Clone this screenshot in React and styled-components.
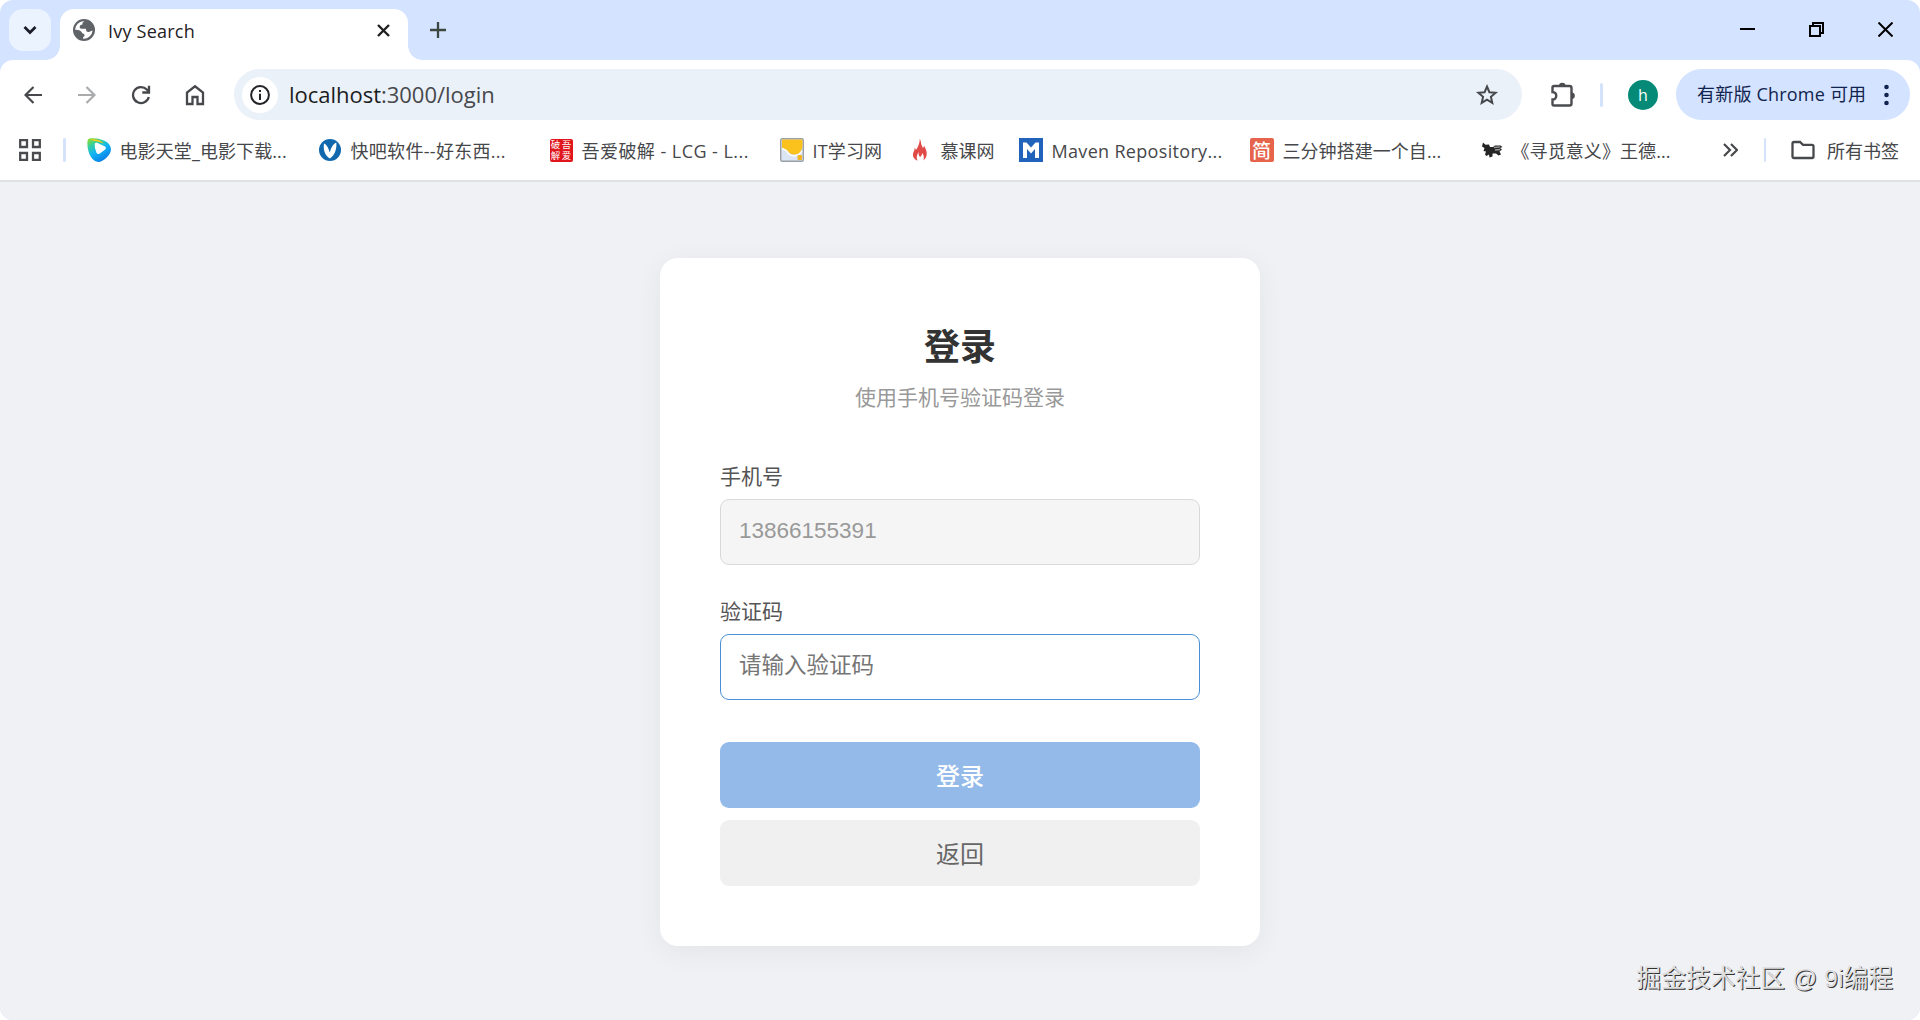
import React from 'react';
import styled, { createGlobalStyle } from 'styled-components';

const Global = createGlobalStyle`
  *, *::before, *::after { box-sizing: border-box; }
  body { margin: 0; background: #fff; overflow: hidden; }
  svg { display: block; flex: none; }
  button, input { font: inherit; margin: 0; }
`;

const Window = styled.div`
  position: relative;
  display: flex;
  flex-direction: column;
  width: 1920px;
  height: 1020px;
  border-radius: 13px;
  overflow: hidden;
  background: #d4e3ff;
  font-family: "Open Sans", "Noto Sans CJK SC", sans-serif;
`;

const TabStrip = styled.div`
  display: flex;
  height: 60px;
  padding: 9px 27px 0 9px;
`;

const TabSearch = styled.div`
  display: grid;
  place-items: center;
  width: 42px;
  height: 42px;
  border-radius: 14px;
  background: #ebf3ff;
`;

const Tab = styled.div`
  position: relative;
  display: flex;
  align-items: center;
  width: 348px;
  height: 51px;
  margin-left: 9px;
  padding: 0 18px 9px 13px;
  border-radius: 14px 14px 0 0;
  background: #fff;
  &::before, &::after {
    content: "";
    position: absolute;
    bottom: 0;
    width: 14px;
    height: 14px;
  }
  &::before { left: -14px; background: radial-gradient(circle at 0 0, transparent 13.5px, #fff 14px); }
  &::after { right: -14px; background: radial-gradient(circle at 100% 0, transparent 13.5px, #fff 14px); }
`;

const TabTitle = styled.span`
  flex: 1;
  margin-left: 13px;
  padding-top: 2px;
  font-size: 18px;
  line-height: 24px;
  letter-spacing: 0.22px;
  color: #1f2023;
`;

const NewTab = styled.div`
  display: grid;
  place-items: center;
  width: 42px;
  height: 42px;
  margin-left: 9px;
`;

const WindowControls = styled.div`
  display: flex;
  gap: 54px;
  height: 41px;
  align-items: center;
  margin-left: auto;
`;

const Chrome = styled.div`
  background: #fff;
  border-radius: 13px 13px 0 0;
  height: 122px;
  border-bottom: 2px solid #dfe1e4;
`;

const Toolbar = styled.div`
  display: flex;
  align-items: center;
  height: 69px;
  padding: 0 10px 0 6px;
`;

const NavButton = styled.div`
  display: grid;
  place-items: center;
  width: 54px;
  height: 51px;
  color: ${p => (p.$off ? '#a9abad' : '#46484b')};
`;

const Omnibox = styled.div`
  display: flex;
  align-items: center;
  width: 1288px;
  height: 51px;
  margin-left: 12px;
  padding: 0 23px 0 8px;
  border-radius: 26px;
  background: #ebf1f9;
`;

const SiteInfo = styled.div`
  display: grid;
  place-items: center;
  width: 36px;
  height: 36px;
  border-radius: 50%;
  background: #fff;
`;

const Url = styled.div`
  flex: 1;
  margin-left: 11px;
  padding-bottom: 1px;
  font-size: 22px;
  line-height: 30px;
  letter-spacing: -0.02px;
  color: #46484c;
  b { font-weight: 400; color: #1c1d20; }
`;

const Divider = styled.div`
  width: 3px;
  height: 24px;
  border-radius: 2px;
  background: #d4e3fb;
  margin: 0 ${p => p.$r}px 0 ${p => p.$l}px;
`;

const Extensions = styled.div`
  margin-left: 28px;
`;

const Avatar = styled.div`
  display: grid;
  place-items: center;
  width: 30px;
  height: 30px;
  border-radius: 50%;
  background: #058a78;
  color: #fff;
  font-size: 16px;
  line-height: 30px;
`;

const UpdateChip = styled.div`
  display: flex;
  align-items: center;
  justify-content: space-between;
  width: 234px;
  height: 51px;
  margin-left: 18px;
  padding: 0 21px 0 21px;
  border-radius: 26px;
  background: #d4e3ff;
  color: #10244f;
  font-size: 18px;
  line-height: 26px;
  letter-spacing: 0.2px;
  white-space: nowrap;
  span { padding-bottom: 1px; }
`;

const Bookmarks = styled.div`
  display: flex;
  align-items: center;
  height: 42px;
  padding: 0 20px 0 19px;
`;

const Bookmark = styled.div`
  display: flex;
  align-items: center;
  width: ${p => p.$w}px;
  flex: none;
  gap: ${p => p.$gap || 9}px;
  color: #46474a;
  font-size: 18px;
  line-height: 26px;
  letter-spacing: ${p => p.$ls || 0}px;
  white-space: nowrap;
`;

const BookmarkName = styled.span`
  padding-top: 2px;
`;

const Seal = styled.div`
  display: grid;
  grid-template-columns: 11px 11px;
  grid-template-rows: 11px 11px;
  place-content: center;
  width: 23px;
  height: 23px;
  border-radius: 2px;
  background: #e0161c;
  color: #fff;
  font: 400 9.5px/11px "Liberation Sans", "Noto Sans CJK SC", sans-serif;
  text-align: center;
  letter-spacing: 0;
`;

const JianBadge = styled.div`
  width: 24px;
  height: 24px;
  border-radius: 2px;
  background: #e6644c;
  color: #fff;
  font: 500 19px/23px "Noto Sans CJK SC", sans-serif;
  text-align: center;
  letter-spacing: 0;
`;

const Page = styled.main`
  flex: 1;
  display: flex;
  justify-content: center;
  align-items: flex-start;
  padding-top: 76px;
  background: #f0f1f5;
`;

const Card = styled.form`
  display: flex;
  flex-direction: column;
  width: 600px;
  height: 688px;
  padding: 63px 60px 60px;
  border-radius: 18px;
  background: #fff;
  box-shadow: 0 6px 30px rgba(0, 0, 0, 0.055);
  font-family: "Liberation Sans", "Noto Sans CJK SC", sans-serif;
`;

const Title = styled.h1`
  margin: 0;
  height: 54px;
  font-size: 36px;
  line-height: 54px;
  text-align: center;
  color: #333;
`;

const Subtitle = styled.p`
  margin: 7px 0 0;
  height: 32px;
  font-size: 21px;
  line-height: 32px;
  text-align: center;
  color: #999;
`;

const Field = styled.label`
  display: flex;
  flex-direction: column;
  gap: 6px;
  margin-top: ${p => p.$top}px;
  font-size: 21px;
  line-height: 32px;
  color: #555;
`;

const Input = styled.input`
  height: 66px;
  padding: 0 18px 2px 18px;
  border: 1px solid ${p => (p.$active ? '#4a90d9' : '#d9d9d9')};
  border-radius: 9px;
  background: ${p => (p.disabled ? '#f5f5f5' : '#fff')};
  color: #999;
  font-size: 22.5px;
  outline: none;
  &::placeholder { color: #757575; opacity: 1; }
`;

const Button = styled.button`
  height: 66px;
  margin-top: ${p => p.$top}px;
  padding: 0 0 1px;
  border: 0;
  border-radius: 9px;
  font-size: 24px;
  font-weight: ${p => (p.$primary ? 500 : 400)};
  background: ${p => (p.$primary ? '#93bae9' : '#f0f0f0')};
  color: ${p => (p.$primary ? '#fff' : '#666')};
`;

const Watermark = styled.div`
  position: absolute;
  right: 27px;
  bottom: 23px;
  font: 400 24.8px/36px "Liberation Sans", "Noto Sans CJK SC", sans-serif;
  color: #dededf;
  text-shadow: 1px 1px 0 #333;
  white-space: nowrap;
`;

const stroke = { fill: 'none', stroke: 'currentColor' };

const Svg = ({ w, h = w, children, ...rest }) => (
  <svg width={w} height={h} viewBox={`0 0 ${w} ${h}`} {...rest}>{children}</svg>
);

const Globe = () => (
  <svg width="22" height="22" viewBox="0 0 22 22">
    <circle cx="11" cy="11" r="11" fill="#5f6368" />
    <path d="M11.5 2.2c-1.8 1-2.3 2-2 3.300c-1.800.2-2.800 1-2.800 2.500c0 1.200.8 1.800 2.300 1.800h3c.9 0 1.200.6 1.200 1.500c0 1.300.8 1.700 2 1.700c1.500 0 1.800-1.200 4.400-1.600A9 9 0 0 1 10 19.700c.1-1.200.4-2.200 1.600-2.600c-.1-1.900-.9-2.800-2.400-2.800C8.500 12.200 6.600 10.800 2 10.800A9 9 0 0 1 11.500 2.200z" fill="#fff" />
  </svg>
);

const MovieIcon = () => (
  <svg width="24" height="24" viewBox="0 0 24 24">
    <defs>
      <linearGradient id="mv" x1="0.1" y1="0" x2="0.7" y2="1">
        <stop offset="0" stopColor="#8edc28" /><stop offset=".25" stopColor="#35cfa0" />
        <stop offset=".55" stopColor="#12b4f5" /><stop offset="1" stopColor="#0878e6" />
      </linearGradient>
    </defs>
    <path d="M.5 3Q1 .3 4 .3C12 0 24 3 24 11.500C24 17 16 24 11.500 24C5 24-.5 14 .5 3z" fill="url(#mv)" />
    <path d="M3 1.500C8 .5 14 2 17 5.500C13 3.800 8 3.500 3 1.500z" fill="#f3c81f" />
    <path d="M7.800 5.800Q8.200 4.300 10 4.800L18 8.500Q19.700 9.700 18.500 11.200L12.500 15.800Q10.800 16.700 9.600 15Q7.200 10 7.800 5.800z" fill="#fff" />
  </svg>
);

const bookmarks = [
  { text: '电影天堂_电影下载...', w: 232, ls: 0.1, icon: <MovieIcon /> },
  {
    text: '快吧软件--好东西...', w: 231, gap: 10, ls: 0.3,
    icon: (
      <Svg w={22}>
        <circle cx="11" cy="11" r="11" fill="#1168ad" />
        <path d="M5 4.500C8 6 9.200 8.500 10.800 13.500C12.300 8.500 13.500 5.500 17.300 3.500C18 10 15.500 17 10.800 19.500C6 16.500 4 11 5 4.500z" fill="#fff" />
      </Svg>
    ),
  },
  {
    text: '吾爱破解 - LCG - L...', w: 230, ls: 0.45,
    icon: <Seal><span>破</span><span>吾</span><span>解</span><span>爱</span></Seal>,
  },
  {
    text: 'IT学习网', w: 128, ls: 0.15,
    icon: (
      <Svg w={24}>
        <rect x=".7" y=".7" width="22.600" height="22.600" rx="1.500" fill="#dce5f5" stroke="#9aa0a4" strokeWidth="1.400" />
        <path d="M2 1.500H22.500V8C22 13 19 16.500 14 16.500C9.500 16.500 8.500 13.500 7 12C5.500 10.500 4 11.500 2 9.500z" fill="#fbc21e" />
        <path d="M2 10.500C4 12 5.500 11.500 6.500 13C8.500 16.500 10 18 14 18C18 18 20.500 15.500 22 13" fill="none" stroke="#fff" strokeWidth="1.300" />
        <rect x="17.500" y="17" width="4.500" height="5" rx="1" fill="#f2b51f" />
      </Svg>
    ),
  },
  {
    text: '慕课网', w: 111,
    icon: (
      <Svg w={24}>
        <path d="M11.800.8C13.500 4 12.500 6 15 10C15.800 9.200 16 8.500 16 7.800C19 12.500 20.500 18 15.500 22.500C16.200 20 16 17.500 14.500 15C13.800 17 13 18.500 12 19C10.500 17.500 10.500 16 10.800 14C8.500 17 8.200 20 9.500 22.800C5.500 21 3.800 17.500 5.800 13.500C6.500 12.500 6.500 11 6.500 10C7.500 10.500 7.800 11.200 8 12C10.500 8.500 11.800 5 11.800.8z" fill="#e04b48" />
      </Svg>
    ),
  },
  {
    text: 'Maven Repository...', w: 231, ls: 0.32,
    icon: (
      <Svg w={24}>
        <rect width="24" height="24" fill="#2163bb" />
        <path d="M4 20V4.500H7.500L12 9.500L16.500 4.500H20V20H16V11L12 15.500L8 11V20z" fill="#fff" />
      </Svg>
    ),
  },
  { text: '三分钟搭建一个自...', w: 230, ls: 0.05, icon: <JianBadge>简</JianBadge> },
  {
    text: '《寻觅意义》王德...', w: 202, gap: 8, ls: 0.08,
    icon: (
      <Svg w={24}>
        <path d="M3 4.500L5.500 6.800L9 6.500L10 9H13L15 7.500H20.500L22.500 9L20 10L22 11.500L19.500 13.500L21 16.500L18.500 17.500L16 15.500L12.500 15.500V18.500L9.500 19.500L9 16.500L6.500 18L5 16.500L6 13.500L3.500 13L4.500 10L2 8.500z" fill="#252525" />
        <path d="M14 9.500L20 8.800M15 12L20 11.500" stroke="#999" strokeWidth="1.300" />
      </Svg>
    ),
  },
];

export default function App() {
  return (
    <Window>
      <Global />
      <TabStrip>
        <TabSearch>
          <Svg w={14} h={10} style={{ color: '#1b1c28' }}><path d="M1.500 2L7 7.500L12.500 2" {...stroke} strokeWidth="2.700" /></Svg>
        </TabSearch>
        <Tab>
          <Globe />
          <TabTitle>Ivy Search</TabTitle>
          <Svg w={13}><path d="M1 1L12 12M12 1L1 12" stroke="#1e2022" strokeWidth="2.400" /></Svg>
        </Tab>
        <NewTab>
          <Svg w={16}><path d="M8 0V16M0 8H16" stroke="#3c473f" strokeWidth="2.300" /></Svg>
        </NewTab>
        <WindowControls>
          <Svg w={15}><path d="M0 7H15" stroke="#000" strokeWidth="2" /></Svg>
          <Svg w={15}><path d="M1 4H11V14H1zM4 4V1H14V11H11" fill="none" stroke="#000" strokeWidth="2" /></Svg>
          <Svg w={15}><path d="M.5.5L14.500 14.500M14.500.5L.5 14.500" stroke="#000" strokeWidth="2" /></Svg>
        </WindowControls>
      </TabStrip>
      <Chrome>
        <Toolbar>
          <NavButton><Svg w={18}><path d="M18 9H2M9.500 1L1.500 9L9.500 17" {...stroke} strokeWidth="2.200" /></Svg></NavButton>
          <NavButton $off><Svg w={18}><path d="M0 9H16M8.500 1L16.500 9L8.500 17" {...stroke} strokeWidth="2.200" /></Svg></NavButton>
          <NavButton>
            <Svg w={20}><path d="M17.800 12A8 8 0 1 1 15.800 4.500L18 6.700M18 .8V7.500H11.300" {...stroke} strokeWidth="2.300" /></Svg>
          </NavButton>
          <NavButton>
            <Svg w={20} h={22}><path d="M2 20V8.500L10 2.300L18 8.500V20H12.500V13H7.500V20z" {...stroke} strokeWidth="2.300" /></Svg>
          </NavButton>
          <Omnibox>
            <SiteInfo>
              <Svg w={20}>
                <circle cx="10" cy="10" r="8.900" fill="none" stroke="#222427" strokeWidth="2" />
                <path d="M10 8.800V15M10 5V7" stroke="#222427" strokeWidth="2" />
              </Svg>
            </SiteInfo>
            <Url><b>localhost</b>:3000/login</Url>
            <Svg w={24} style={{ color: '#46484c' }}>
              <path d="M12 3.500L14.400 9.200L20.600 9.700L15.900 13.800L17.300 19.900L12 16.700L6.700 19.900L8.100 13.800L3.400 9.700L9.600 9.200z" {...stroke} strokeWidth="2" />
            </Svg>
          </Omnibox>
          <Extensions>
            <Svg w={26} style={{ color: '#4b4c4f' }}>
              <path d="M4 4H19.500Q21.500 4 21.500 6V21.500Q21.500 23.500 19.500 23.500H4Q2.500 23.500 2.500 22V17.500C7.500 17.500 7.500 10 2.500 10V5.500Q2.500 4 4 4z" {...stroke} strokeWidth="2.400" />
              <path d="M9 4A3.300 3.300 0 0 1 15.600 4zM21.500 10.500A3.300 3.300 0 0 1 21.500 17.100z" fill="currentColor" />
            </Svg>
          </Extensions>
          <Divider $l={24} $r={25} />
          <Avatar>h</Avatar>
          <UpdateChip>
            <span>有新版 Chrome 可用</span>
            <Svg w={5} h={22}>
              <circle cx="2.500" cy="3" r="2.300" fill="#10244f" /><circle cx="2.500" cy="11" r="2.300" fill="#10244f" /><circle cx="2.500" cy="19" r="2.300" fill="#10244f" />
            </Svg>
          </UpdateChip>
        </Toolbar>
        <Bookmarks>
          <Svg w={22}><path d="M1.200 1.200h6.800v6.800h-6.800zM14 1.200h6.800v6.800h-6.800zM1.200 14h6.800v6.800h-6.800zM14 14h6.800v6.800h-6.800z" fill="none" stroke="#4a4b4e" strokeWidth="2.300" /></Svg>
          <Divider $l={22} $r={21} />
          {bookmarks.map(b => (
            <Bookmark key={b.text} $w={b.w} $gap={b.gap} $ls={b.ls}>{b.icon}<BookmarkName>{b.text}</BookmarkName></Bookmark>
          ))}
          <Svg w={15} h={14} style={{ marginLeft: 41 }}><path d="M1 1L7 7L1 13M8 1L14 7L8 13" fill="none" stroke="#46484b" strokeWidth="2.200" /></Svg>
          <Divider $l={26} $r={25} />
          <Bookmark $w={109} $gap={12}>
            <Svg w={24} h={20}><path d="M3 2H9L12 4.800H21Q22.500 4.800 22.500 6.500V16.500Q22.500 18 21 18H3Q1.500 18 1.500 16.500V3.500Q1.500 2 3 2z" fill="none" stroke="#46484b" strokeWidth="2.300" /></Svg>
            <BookmarkName>所有书签</BookmarkName>
          </Bookmark>
        </Bookmarks>
      </Chrome>
      <Page>
        <Card onSubmit={e => e.preventDefault()}>
          <Title>登录</Title>
          <Subtitle>使用手机号验证码登录</Subtitle>
          <Field $top={47}>
            手机号
            <Input disabled defaultValue="13866155391" />
          </Field>
          <Field $top={31}>
            验证码
            <Input $active placeholder="请输入验证码" />
          </Field>
          <Button type="submit" $primary $top={42}>登录</Button>
          <Button type="button" $top={12}>返回</Button>
        </Card>
      </Page>
      <Watermark>掘金技术社区 @ 9i编程</Watermark>
    </Window>
  );
}
